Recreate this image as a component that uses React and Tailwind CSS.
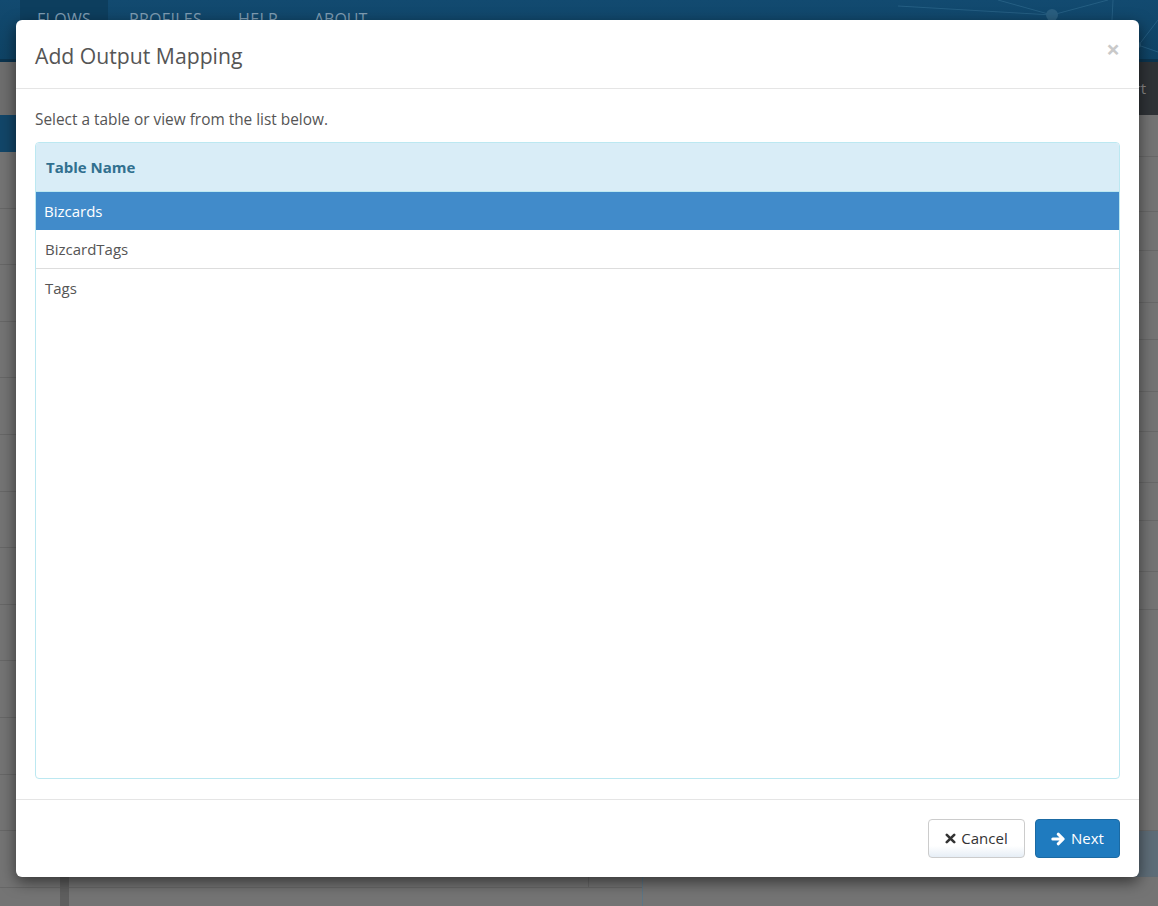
import React from "react";

const FONT = { fontFamily: '"Open Sans", "Noto Sans", "Liberation Sans", sans-serif' };

function TimesIcon() {
  return (
    <svg width="11" height="11" viewBox="0 0 11 11" className="shrink-0">
      <path d="M1.8 1.8 L9.2 9.2 M9.2 1.8 L1.8 9.2" stroke="#333" strokeWidth="2.6" strokeLinecap="round" fill="none" />
    </svg>
  );
}

function ArrowIcon() {
  return (
    <svg width="15" height="14" viewBox="0 0 15 14" className="shrink-0">
      <path d="M1.8 7 H11.5 M7.2 2.2 L12.2 7 L7.2 11.8" stroke="#fff" strokeWidth="3" strokeLinecap="round" strokeLinejoin="round" fill="none" />
    </svg>
  );
}

export default function App() {
  const leftRows = Array.from({ length: 13 });
  const rightRows = [42, 55, 39, 52, 37, 52, 40, 51, 38, 51, 38, 221, 46, 60];
  return (
    <div className="relative h-[906px] w-full overflow-hidden bg-[#747474]" style={FONT}>
      {/* dimmed background page */}
      <div className="flex h-full flex-col">
        <nav className="relative flex h-[62px] shrink-0 border-b-[3px] border-[#0b344f] bg-gradient-to-b from-[#124a70] to-[#0f4365] pl-[20px]">
          <div className="flex h-full w-[88px] items-start justify-center bg-[#0d3e5e] pt-[11px] text-[16px] leading-none tracking-[0.3px] text-[#7f9db3]">FLOWS</div>
          <div className="flex h-full items-start pl-[21px] pr-[17px] pt-[11px] text-[16px] leading-none tracking-[0.3px] text-[#7f9db3]">PROFILES</div>
          <div className="flex h-full items-start px-[19px] pt-[11px] text-[16px] leading-none tracking-[0.3px] text-[#7f9db3]">HELP</div>
          <div className="flex h-full items-start pl-[17px] pr-[19px] pt-[11px] text-[16px] leading-none tracking-[0px] text-[#7f9db3]">ABOUT</div>
          <svg className="absolute right-0 top-0" width="260" height="59" viewBox="0 0 260 59">
            <g stroke="#2a6488" strokeWidth="1" fill="none" opacity="0.8">
              <line x1="0" y1="6" x2="154" y2="15" />
              <line x1="154" y1="15" x2="210" y2="0" />
              <line x1="154" y1="15" x2="180" y2="59" />
              <line x1="215" y1="0" x2="212" y2="59" />
              <line x1="230" y1="59" x2="260" y2="20" />
              <line x1="240" y1="45" x2="260" y2="52" />
              <line x1="100" y1="0" x2="154" y2="15" />
            </g>
            <circle cx="154" cy="15" r="6" fill="#2a5f80" />
            <circle cx="240" cy="45" r="3" fill="#2a5f80" />
          </svg>
        </nav>
        <div className="flex flex-1">
          <div className="flex w-[642px] shrink-0">
            <div className="flex w-[60px] flex-col">
              <div className="h-[53px] bg-[#6e6e6e]" />
              <div className="h-[37px] bg-[#124669]" />
              {leftRows.map((_, i) => (
                <div key={i} className="h-[56.6px] border-b border-[#676767]" />
              ))}
            </div>
            <div className="flex flex-1 flex-col border-l-[9px] border-[#5f5f5f]">
              <div className="h-[53px] bg-[#6e6e6e]" />
              <div className="h-[37px] bg-[#124669]" />
              {leftRows.map((_, i) => (
                <div key={i} className="flex h-[56.6px] border-b border-[#676767]">
                  <div className="w-[520px] border-r border-[#676767]" />
                </div>
              ))}
            </div>
          </div>
          <div className="flex flex-1 flex-col border-l border-[#5d7686]">
            <div className="flex h-[53px] items-center justify-end bg-[#2f3337] pr-[12px] text-[15px] text-[#8a8a8a]">Export</div>
            {rightRows.map((h, i) => (
              <div key={i} style={{ height: h }} className={i === 12 ? "border-b border-[#5f6c75] bg-[#5e6d78]" : "border-b border-[#686868]"} />
            ))}
          </div>
        </div>
      </div>

      {/* modal */}
      <div className="absolute left-[16px] top-[20px] flex h-[857px] w-[1123px] flex-col rounded-[6px] bg-white shadow-[0_5px_15px_rgba(0,0,0,0.55)]">
        <div className="flex h-[69px] shrink-0 items-center justify-between border-b border-[#e5e5e5] pl-[19px] pr-[19px]">
          <h4 className="mt-[3px] text-[21.2px] leading-none text-[#555]">Add Output Mapping</h4>
          <span className="mt-[-10px] text-[24px] font-bold leading-none text-[#c9c9c9]">×</span>
        </div>
        <div className="flex flex-1 flex-col px-[19px] pb-[20px] pt-[21px]">
          <p className="mb-[12px] h-[20px] text-[15.4px] leading-[20px] text-[#555]">Select a table or view from the list below.</p>
          <div className="flex flex-1 flex-col overflow-hidden rounded-[4px] border border-[#bce8f1]">
            <div className="flex h-[49px] shrink-0 items-center border-b border-[#bce8f1] bg-[#d9edf7] pl-[10px] text-[15px] font-bold text-[#31708f]">Table Name</div>
            <div className="flex h-[38px] shrink-0 items-center bg-[#418bca] pl-[8px] text-[15px] text-white">Bizcards</div>
            <div className="flex h-[39px] shrink-0 items-center border-b border-[#dddddd] pl-[9px] text-[15px] text-[#555]">BizcardTags</div>
            <div className="flex h-[39px] shrink-0 items-center pl-[9px] text-[15px] text-[#555]">Tags</div>
          </div>
        </div>
        <div className="flex h-[78px] shrink-0 items-start justify-end gap-[10px] border-t border-[#e5e5e5] pr-[19px] pt-[19px]">
          <button className="flex h-[39px] w-[97px] items-center justify-center gap-[5px] rounded-[4px] border border-[#cccccc] bg-gradient-to-b from-white from-70% to-[#e6eef6] text-[15px] text-[#333]">
            <TimesIcon />
            <span>Cancel</span>
          </button>
          <button className="flex h-[39px] w-[85px] items-center justify-center gap-[5px] rounded-[4px] border border-[#1b6aa3] bg-[#1f7bbf] text-[15px] text-white">
            <ArrowIcon />
            <span>Next</span>
          </button>
        </div>
      </div>
    </div>
  );
}
